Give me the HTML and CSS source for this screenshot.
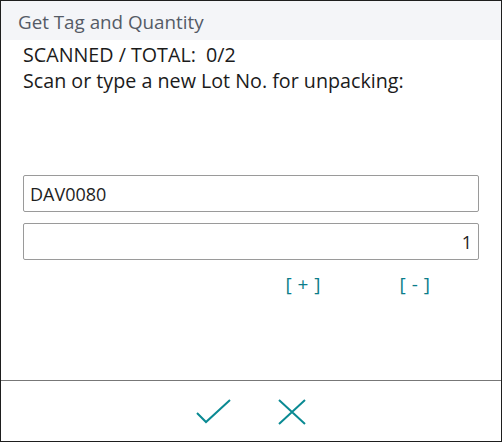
FILE: index.html
```html
<!DOCTYPE html>
<html lang="en">
<head>
    <meta charset="UTF-8">
    <meta name="viewport" content="width=device-width, initial-scale=1.0">
    <title>Get Tag and Quantity</title>
    <link rel="stylesheet" href="styles.css">
</head>
<body>

    <div class="dialog">
        <div class="dialog-title">Get Tag and Quantity</div>

        <div class="dialog-body">
            <div class="info-line">SCANNED / TOTAL:&nbsp; 0/2</div>
            <div class="info-line">Scan or type a new Lot No. for unpacking:</div>

            <div class="fields">
                <input type="text" class="field" id="lot-no" value="DAV0080">
                <input type="text" class="field field-qty" id="qty" value="1">
            </div>

            <div class="qty-controls">
                <button type="button" class="link-btn" id="plus-btn">[ + ]</button>
                <button type="button" class="link-btn" id="minus-btn">[ - ]</button>
            </div>
        </div>

        <div class="dialog-footer">
            <button type="button" class="icon-btn" title="OK">
                <svg width="36" height="26" viewBox="0 0 36 26">
                    <path d="M1 14 L10 23 L34 1" fill="none" stroke="#0a8a93" stroke-width="2"/>
                </svg>
            </button>
            <button type="button" class="icon-btn" title="Cancel">
                <svg width="28" height="26" viewBox="0 0 28 26">
                    <path d="M1 1 L27 25 M27 1 L1 25" fill="none" stroke="#0a8a93" stroke-width="2"/>
                </svg>
            </button>
        </div>
    </div>

</body>
</html>
```

FILE: styles.css
```css
body {
    margin: 0;
    font-family: "Open Sans", "Noto Sans", Arial, sans-serif;
    color: #212121;
    background: #ffffff;
}
.dialog {
    width: 502px;
    height: 442px;
    box-sizing: border-box;
    border: 1px solid #1e1e1e;
    display: flex;
    flex-direction: column;
}
.dialog-title {
    height: 39px;
    background-color: #f4f5f8;
    color: #555b66;
    font-size: 18.8px;
    line-height: 42px;
    padding-left: 17px;
    overflow: hidden;
}
.dialog-body {
    flex: 1;
    padding: 2px 22px 0;
}
.info-line {
    font-size: 19.7px;
    line-height: 26px;
    color: #1b1b1b;
}
.fields {
    margin-top: 81px;
    display: flex;
    flex-direction: column;
    gap: 11px;
}
.field {
    height: 37px;
    box-sizing: border-box;
    width: 100%;
    border: 1px solid #9a9a9a;
    border-radius: 2px;
    padding: 0 6px;
    font-family: inherit;
    font-size: 18px;
    color: #1e1e1e;
    outline: none;
}
.field-qty {
    text-align: right;
}
.qty-controls {
    display: flex;
    justify-content: flex-end;
    gap: 79px;
    padding-right: 49px;
    margin-top: 13px;
}
.link-btn {
    background: none;
    border: none;
    padding: 0;
    font-family: inherit;
    font-size: 19px;
    line-height: 22px;
    word-spacing: 1px;
    color: #0b7c8a;
    cursor: pointer;
}
.dialog-footer {
    height: 61px;
    border-top: 1px solid #777777;
    display: flex;
    justify-content: center;
    align-items: center;
    gap: 46px;
    padding-top: 2px;
    box-sizing: border-box;
}
.icon-btn {
    background: none;
    border: none;
    padding: 0;
    display: flex;
    cursor: pointer;
}
```
